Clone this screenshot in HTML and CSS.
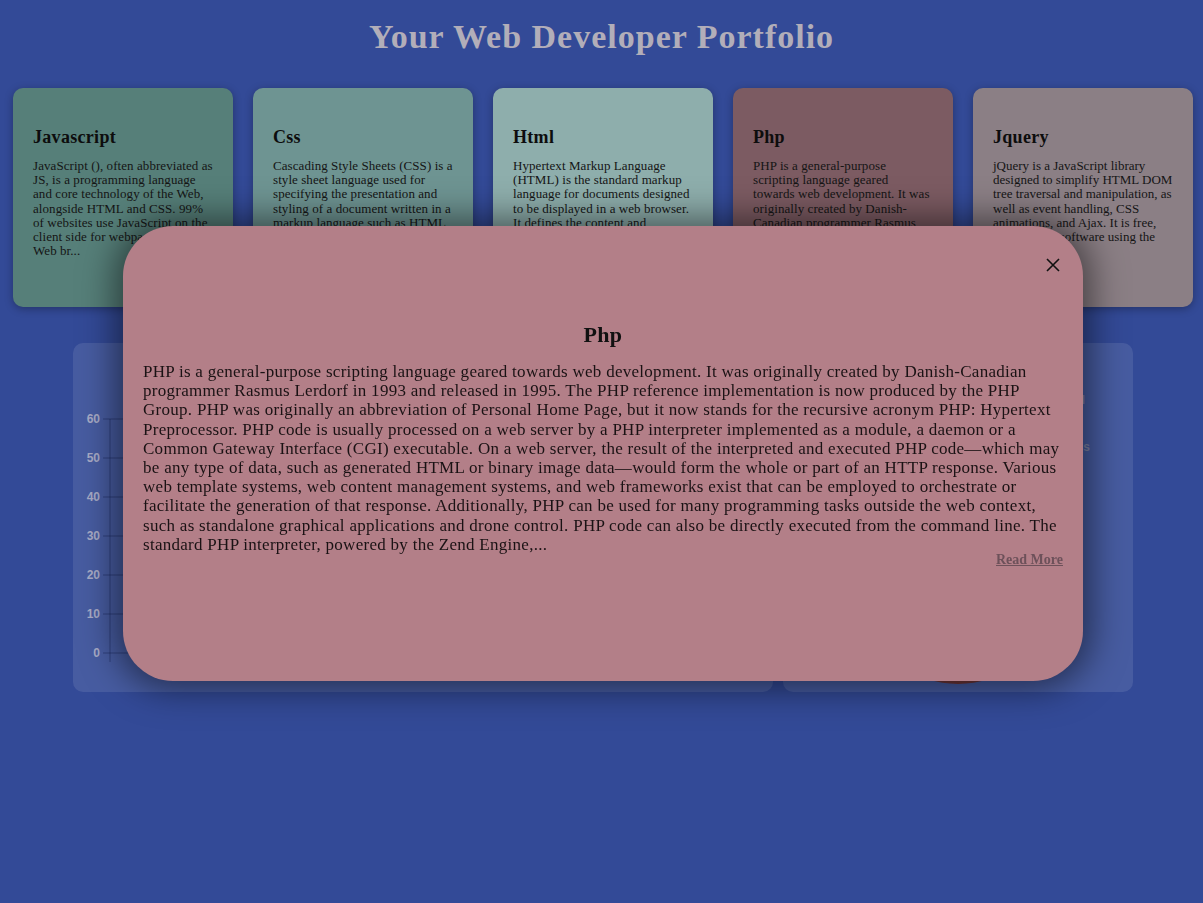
FILE: index.html
```html
<!DOCTYPE html>
<html lang="en">
<head>
<meta charset="utf-8">
<title>Your Web Developer Portfolio</title>
<link rel="stylesheet" href="styles.css">
</head>
<body>
<h1 class="page-title">Your Web Developer Portfolio</h1>

<div class="cards">
  <div class="card card-js">
    <h3 class="card-title">Javascript</h3>
    <p class="card-text">JavaScript (), often abbreviated as JS, is a programming language and core technology of the Web, alongside HTML and CSS. 99% of websites use JavaScript on the client side for webpage behavior. Web br...</p>
  </div>
  <div class="card card-css">
    <h3 class="card-title">Css</h3>
    <p class="card-text">Cascading Style Sheets (CSS) is a style sheet language used for specifying the presentation and styling of a document written in a markup language such as HTML or XML (including XML dialects such as SVG, Ma...</p>
  </div>
  <div class="card card-html">
    <h3 class="card-title">Html</h3>
    <p class="card-text">Hypertext Markup Language (HTML) is the standard markup language for documents designed to be displayed in a web browser. It defines the content and structure of web content. It is often assisted by tec...</p>
  </div>
  <div class="card card-php">
    <h3 class="card-title">Php</h3>
    <p class="card-text">PHP is a general-purpose scripting language geared towards web development. It was originally created by Danish-Canadian programmer Rasmus Lerdorf in 1993 and released in 1995. The PHP reference imp...</p>
  </div>
  <div class="card card-jq">
    <h3 class="card-title">Jquery</h3>
    <p class="card-text card-text-tight">jQuery is a JavaScript library designed to simplify HTML DOM tree traversal and manipulation, as well as event handling, CSS animations, and Ajax. It is free, open-source software using the permissi...</p>
  </div>
</div>

<div class="charts">
  <div class="panel panel-bar">
    <svg class="chart-svg" width="700" height="349" viewBox="0 0 700 349">
      <g class="grid">
        <line x1="30" y1="76" x2="690" y2="76"/>
        <line x1="30" y1="115" x2="690" y2="115"/>
        <line x1="30" y1="154" x2="690" y2="154"/>
        <line x1="30" y1="193" x2="690" y2="193"/>
        <line x1="30" y1="232" x2="690" y2="232"/>
        <line x1="30" y1="271" x2="690" y2="271"/>
        <line x1="30" y1="310" x2="690" y2="310"/>
        <line x1="37" y1="76" x2="37" y2="319"/>
      </g>
      <g class="axis-labels">
        <text x="27" y="80">60</text>
        <text x="27" y="119">50</text>
        <text x="27" y="158">40</text>
        <text x="27" y="197">30</text>
        <text x="27" y="236">20</text>
        <text x="27" y="275">10</text>
        <text x="27" y="314">0</text>
      </g>
    </svg>
  </div>
  <div class="panel panel-pie">
    <svg class="chart-svg" width="350" height="349" viewBox="0 0 350 349">
      <g class="legend">
        <text x="302" y="61">Level</text>
        <text x="307" y="108">Class</text>
      </g>
      <path class="slice s1" d="M175 241 L175 141 A100 100 0 0 1 270.1 210.1 Z"/>
      <path class="slice s2" d="M175 241 L270.1 210.1 A100 100 0 0 1 233.8 321.9 Z"/>
      <path class="slice s3" d="M175 241 L233.8 321.9 A100 100 0 0 1 116.2 321.9 Z"/>
      <path class="slice s4" d="M175 241 L116.2 321.9 A100 100 0 0 1 79.9 210.1 Z"/>
      <path class="slice s5" d="M175 241 L79.9 210.1 A100 100 0 0 1 175 141 Z"/>
    </svg>
  </div>
</div>

<div class="modal">
  <button class="modal-close" aria-label="Close">
    <svg width="14" height="14" viewBox="0 0 14 14"><path d="M1 1 L13 13 M13 1 L1 13" stroke="#111" stroke-width="1.6" fill="none"/></svg>
  </button>
  <h2 class="modal-title">Php</h2>
  <p class="modal-text">PHP is a general-purpose scripting language geared towards web development. It was originally created by Danish-Canadian programmer Rasmus Lerdorf in 1993 and released in 1995. The PHP reference implementation is now produced by the PHP Group. PHP was originally an abbreviation of Personal Home Page, but it now stands for the recursive acronym PHP: Hypertext Preprocessor. PHP code is usually processed on a web server by a PHP interpreter implemented as a module, a daemon or a Common Gateway Interface (CGI) executable. On a web server, the result of the interpreted and executed PHP code—which may be any type of data, such as generated HTML or binary image data—would form the whole or part of an HTTP response. Various web template systems, web content management systems, and web frameworks exist that can be employed to orchestrate or facilitate the generation of that response. Additionally, PHP can be used for many programming tasks outside the web context, such as standalone graphical applications and drone control. PHP code can also be directly executed from the command line. The standard PHP interpreter, powered by the Zend Engine,...</p>
  <a class="read-more" href="#">Read More</a>
</div>
</body>
</html>
```

FILE: styles.css
```css
html, body {
  margin: 0;
  padding: 0;
}
body {
  background: #334a97;
  font-family: "Liberation Serif", "Times New Roman", serif;
  color: #111;
  min-height: 903px;
}
.page-title {
  margin: 18px 0 0;
  text-align: center;
  font-size: 34px;
  line-height: 38px;
  letter-spacing: 1px;
  font-weight: bold;
  color: #b2aeb9;
}
.cards {
  display: flex;
  gap: 20px;
  padding: 0 10px 0 13px;
  margin-top: 32px;
}
.card {
  width: 220px;
  height: 219px;
  box-sizing: border-box;
  padding: 20px;
  border-radius: 10px;
  overflow: hidden;
  box-shadow: 0 2px 8px rgba(0, 0, 0, 0.3);
}
.card-js { background: #567f79; }
.card-css { background: #6e9492; }
.card-html { background: #8eaeac; }
.card-php { background: #7c5b62; }
.card-jq { background: #8b7f85; }
.card-title {
  margin: 19px 0 11px;
  font-size: 18px;
  line-height: 21px;
  letter-spacing: 0.3px;
  font-weight: bold;
  color: #0d0d0d;
}
.card-text {
  margin: 0;
  font-size: 13px;
  line-height: 14.2px;
  letter-spacing: 0.07px;
  color: #151515;
}
.card-text-tight {
  letter-spacing: 0;
}
.charts {
  display: flex;
  gap: 10px;
  padding-left: 73px;
  margin-top: 36px;
}
.panel {
  height: 349px;
  border-radius: 10px;
  background: rgba(255, 255, 255, 0.1);
  overflow: hidden;
}
.panel-bar { width: 700px; }
.panel-pie { width: 350px; }
.chart-svg { display: block; }
.grid line {
  stroke: rgba(20, 30, 80, 0.45);
  stroke-width: 1;
}
.axis-labels text {
  font-family: "Liberation Sans", Arial, sans-serif;
  font-weight: bold;
  font-size: 12px;
  fill: #a7abc6;
  text-anchor: end;
}
.legend text {
  font-family: "Liberation Sans", Arial, sans-serif;
  font-weight: bold;
  font-size: 12px;
  fill: #7d83a6;
  text-anchor: end;
}
.slice { stroke: none; }
.s1 { fill: #5b7f7b; }
.s2 { fill: #8eaeac; }
.s3 { fill: #6e3538; }
.s4 { fill: #8b7f85; }
.s5 { fill: #6e9492; }
.modal {
  position: fixed;
  top: 226px;
  left: 123px;
  width: 960px;
  height: 455px;
  box-sizing: border-box;
  padding: 96px 20px 0;
  border-radius: 50px;
  background: #b37f88;
  box-shadow: 0 0 35px 8px rgba(0, 0, 0, 0.5);
  display: flex;
  flex-direction: column;
}
.modal-close {
  position: absolute;
  top: 32px;
  right: 23px;
  width: 14px;
  height: 14px;
  padding: 0;
  border: 0;
  background: none;
  cursor: pointer;
}
.modal-close svg { display: block; }
.modal-title {
  margin: 0 0 14px;
  text-align: center;
  font-size: 22px;
  line-height: 26px;
  letter-spacing: 0.3px;
  font-weight: bold;
  color: #111;
}
.modal-text {
  margin: 0;
  font-size: 17px;
  line-height: 19.2px;
  letter-spacing: 0.28px;
  color: #1a1214;
}
.read-more {
  align-self: flex-end;
  display: block;
  margin-top: 1px;
  font-size: 14px;
  line-height: 9px;
  font-weight: bold;
  color: #6d515a;
  text-decoration: underline;
}
```
